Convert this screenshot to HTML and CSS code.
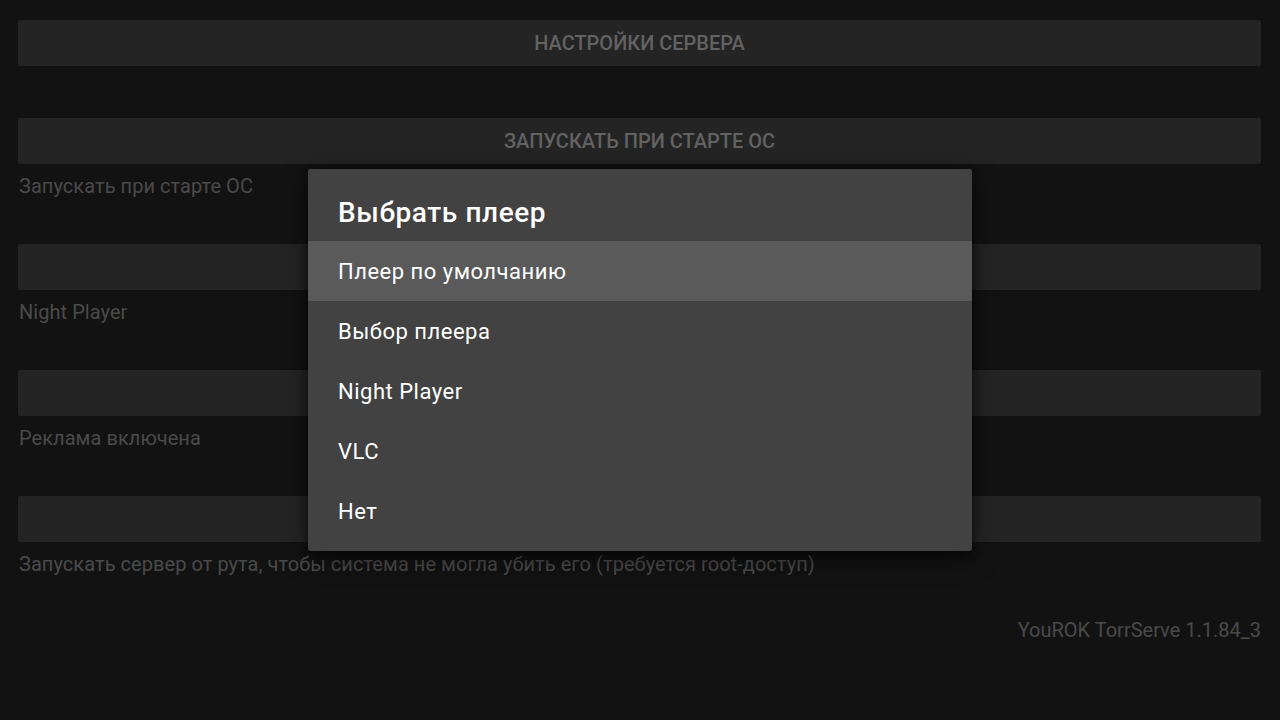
FILE: index.html
```html
<!DOCTYPE html>
<html lang="ru">
<head>
<meta charset="utf-8">
<title>TorrServe</title>
<link rel="stylesheet" href="styles.css">
</head>
<body>
<main class="settings">
  <section class="item">
    <div class="btn">Настройки сервера</div>
  </section>
  <section class="item">
    <div class="btn">Запускать при старте ОС</div>
    <div class="desc">Запускать при старте ОС</div>
  </section>
  <section class="item">
    <div class="btn hidden-label">Выбрать плеер</div>
    <div class="desc">Night Player</div>
  </section>
  <section class="item">
    <div class="btn hidden-label">Реклама</div>
    <div class="desc">Реклама включена</div>
  </section>
  <section class="item">
    <div class="btn hidden-label">Запуск от рута</div>
    <div class="desc">Запускать сервер от рута, чтобы система не могла убить его (требуется root-доступ)</div>
  </section>
  <div class="version">YouROK TorrServe 1.1.84_3</div>
</main>

<div class="dialog">
  <div class="dialog-title">Выбрать плеер</div>
  <ul class="options">
    <li class="option selected">Плеер по умолчанию</li>
    <li class="option">Выбор плеера</li>
    <li class="option">Night Player</li>
    <li class="option">VLC</li>
    <li class="option">Нет</li>
  </ul>
</div>
</body>
</html>
```
FILE: styles.css
```css
html, body {
  margin: 0;
  padding: 0;
  background: #121212;
  font-family: Roboto, "Noto Sans", "Liberation Sans", sans-serif;
  width: 1280px;
  height: 720px;
  overflow: hidden;
}

.settings {
  padding: 20px 19px 0 18px;
  display: flex;
  flex-direction: column;
}

.item {
  display: flex;
  flex-direction: column;
  margin-bottom: 52px;
}

.btn {
  height: 46px;
  background: #242424;
  border-radius: 2px;
  display: flex;
  align-items: center;
  justify-content: center;
  color: #626262;
  font-size: 20px;
  font-weight: 500;
  text-transform: uppercase;
}

.hidden-label {
  color: transparent;
}

.desc {
  height: 28px;
  box-sizing: border-box;
  padding-top: 8px;
  padding-left: 1px;
  color: #4a4a4a;
  font-size: 20px;
  letter-spacing: 0.05px;
  line-height: 28px;
  white-space: nowrap;
}

.version {
  margin-top: -6px;
  text-align: right;
  color: #4a4a4a;
  font-size: 20px;
  line-height: 28px;
}

.dialog {
  position: absolute;
  left: 308px;
  top: 169px;
  width: 664px;
  background: #424242;
  border-radius: 2px;
  box-shadow: 0 6px 24px rgba(0, 0, 0, 0.6), 0 2px 6px rgba(0, 0, 0, 0.4);
  padding-bottom: 10px;
}

.dialog-title {
  height: 72px;
  box-sizing: border-box;
  padding: 29px 30px 0 30px;
  color: #ffffff;
  font-size: 28px;
  font-weight: 500;
  letter-spacing: 0.6px;
  line-height: 30px;
}

.options {
  list-style: none;
  margin: 0;
  padding: 0;
}

.option {
  height: 60px;
  display: flex;
  align-items: center;
  padding: 0 30px;
  color: #ffffff;
  font-size: 22px;
  letter-spacing: 0.5px;
}

.option.selected {
  background: #5a5a5a;
}
```
